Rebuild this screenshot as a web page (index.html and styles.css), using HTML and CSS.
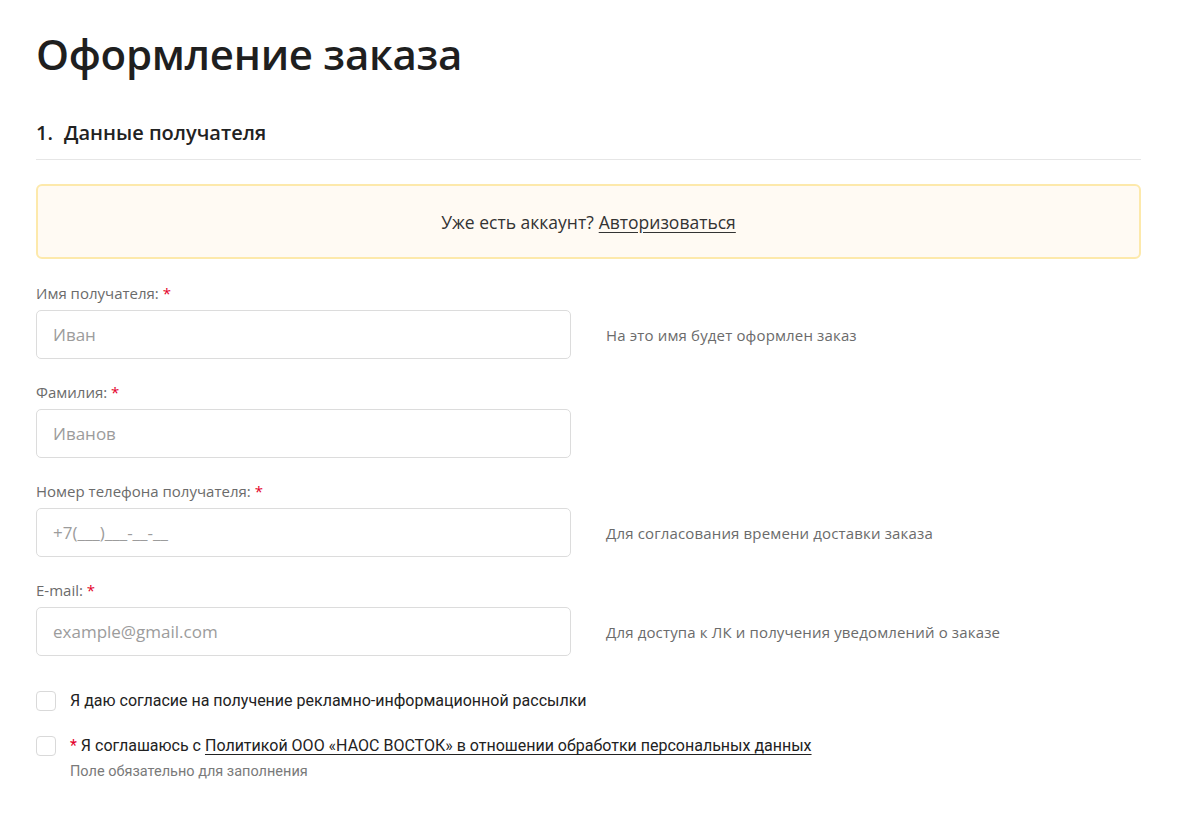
FILE: index.html
```html
<!DOCTYPE html>
<html lang="ru">
<head>
<meta charset="utf-8">
<link rel="stylesheet" href="styles.css">
</head>
<body>
<main class="page">
  <h1 class="title">Оформление заказа</h1>
  <h2 class="section-title"><span class="num">1.</span>Данные получателя</h2>
  <div class="divider"></div>
  <div class="banner">Уже есть аккаунт? <a href="#" class="link">Авторизоваться</a></div>

  <div class="field">
    <label class="label">Имя получателя: <span class="req">*</span></label>
    <div class="row">
      <div class="input"><span class="ph">Иван</span></div>
      <div class="hint">На это имя будет оформлен заказ</div>
    </div>
  </div>

  <div class="field">
    <label class="label">Фамилия: <span class="req">*</span></label>
    <div class="row">
      <div class="input"><span class="ph">Иванов</span></div>
    </div>
  </div>

  <div class="field">
    <label class="label">Номер телефона получателя: <span class="req">*</span></label>
    <div class="row">
      <div class="input"><span class="ph">+7(___)___-__-__</span></div>
      <div class="hint">Для согласования времени доставки заказа</div>
    </div>
  </div>

  <div class="field">
    <label class="label">E-mail: <span class="req">*</span></label>
    <div class="row">
      <div class="input"><span class="ph">example@gmail.com</span></div>
      <div class="hint">Для доступа к ЛК и получения уведомлений о заказе</div>
    </div>
  </div>

  <div class="checks">
    <div class="check">
      <span class="box"></span>
      <div class="check-text">Я даю согласие на получение рекламно-информационной рассылки</div>
    </div>
    <div class="check">
      <span class="box"></span>
      <div>
        <div class="check-text"><span class="req">*</span> Я соглашаюсь с <a href="#" class="link">Политикой ООО «НАОС ВОСТОК» в отношении обработки персональных данных</a></div>
        <div class="check-note">Поле обязательно для заполнения</div>
      </div>
    </div>
  </div>
</main>
</body>
</html>
```

FILE: styles.css
```css
* { box-sizing: border-box; }
html, body { margin: 0; padding: 0; background: #fff; }
body { font-family: "Open Sans", "Noto Sans", sans-serif; color: #222; }
.page { width: 1105px; margin-left: 36px; padding-top: 26px; }
.title { margin: 0; font-size: 42px; font-weight: 600; line-height: 56px; color: #1f1f1f; letter-spacing: -0.3px; }
.section-title { margin: 38px 0 0; font-size: 20px; font-weight: 600; line-height: 26px; color: #222; display: flex; }
.section-title .num { width: 28px; }
.divider { height: 1px; background: #e6e6e6; margin-top: 13px; }
.banner { margin-top: 24px; height: 75px; border: 2px solid #fde9ab; border-radius: 6px; background: #fffaf3; display: flex; align-items: center; justify-content: center; font-size: 17.5px; color: #333; }
.link { color: #333; text-decoration: underline; text-underline-offset: 3px; }
.banner .link { margin-left: 5px; }
.field { margin-top: 24px; }
.field + .field { margin-top: 23px; }
.label { display: block; font-size: 15px; line-height: 20px; color: #6b6b6b; }
.req { color: #e4002b; }
.row { display: flex; align-items: center; margin-top: 7px; }
.input { width: 535px; height: 49px; border: 1px solid #dcdcdc; border-radius: 5px; display: flex; align-items: center; padding-left: 16px; }
.ph { font-size: 17px; color: #9c9c9c; }
.hint { margin-left: 35px; font-size: 15px; color: #6b6b6b; letter-spacing: 0.15px; }
.checks { margin-top: 35px; display: flex; flex-direction: column; gap: 25px; }
.check { display: flex; align-items: flex-start; }
.box { width: 20px; height: 20px; border: 1px solid #d9d9d9; border-radius: 4px; flex: none; margin-right: 14px; }
.check-text { font-family: Roboto, "Noto Sans", sans-serif; font-size: 16px; line-height: 20px; color: #222; }
.check-text .link { color: #222; }
.check-note { font-family: Roboto, "Noto Sans", sans-serif; font-size: 14.5px; color: #7a7a7a; margin-top: 7px; }
```
